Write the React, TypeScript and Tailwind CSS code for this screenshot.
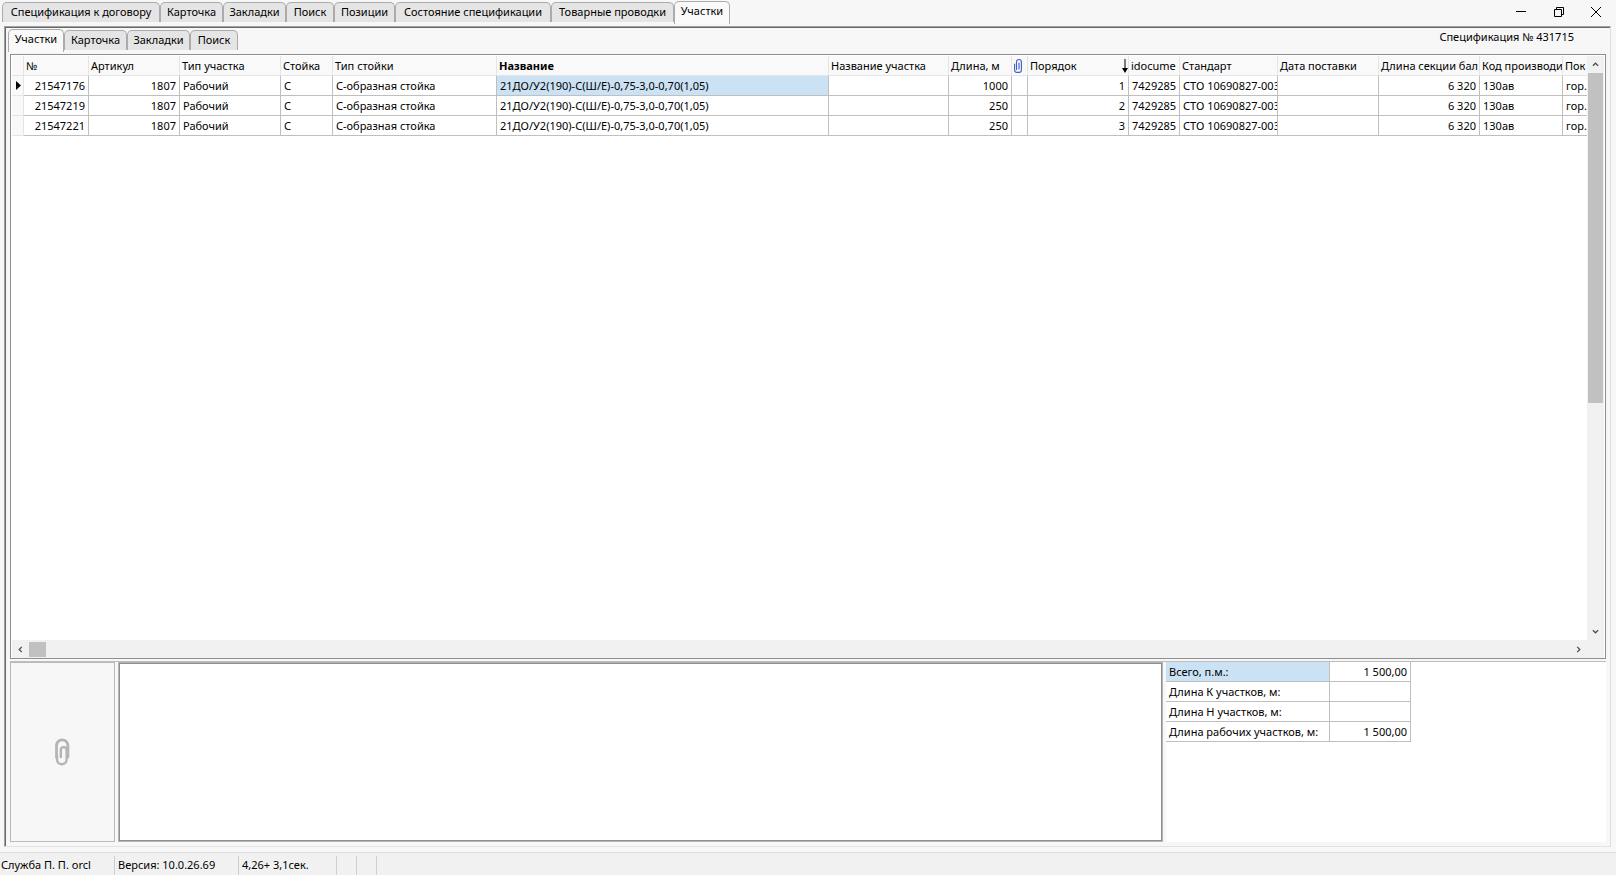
const tabs = ['Спецификация к договору', 'Карточка', 'Закладки', 'Поиск', 'Позиции', 'Состояние спецификации', 'Товарные проводки', 'Участки'];
const innerTabs = ['Участки', 'Карточка', 'Закладки', 'Поиск'];

function TabStrip({ items, active, widths, label }: { items: string[]; active: number; widths: string[]; label: string }) {
  return (
    <div role="tablist" aria-label={label} className="flex shrink-0 items-start">
      {items.map((t, i) => (
        <button
          key={t}
          role="tab"
          aria-selected={i === active}
          className={`${widths[i]} flex shrink-0 items-start justify-center rounded-t-[5px] border-t border-r border-l border-[#ababab] leading-[18px] whitespace-nowrap ${
            i === active ? 'h-[23px] bg-[#f9f9f9]' : 'mt-px h-5 bg-[#e5e5e5]'
          }`}
        >
          {t}
        </button>
      ))}
    </div>
  );
}

type Col = { head: string; w: string; right?: boolean; bold?: boolean; icon?: 'clip' | 'sort' };

const columns: Col[] = [
  { head: '', w: 'w-3' },
  { head: '№', w: 'w-[65px]', right: true },
  { head: 'Артикул', w: 'w-[91px]', right: true },
  { head: 'Тип участка', w: 'w-[101px]' },
  { head: 'Стойка', w: 'w-[52px]' },
  { head: 'Тип стойки', w: 'w-[164px]' },
  { head: 'Название', w: 'w-[332px]', bold: true },
  { head: 'Название участка', w: 'w-[120px]' },
  { head: 'Длина, м', w: 'w-[63px]', right: true },
  { head: '', w: 'w-4', icon: 'clip' },
  { head: 'Порядок', w: 'w-[101px]', right: true, icon: 'sort' },
  { head: 'idocume', w: 'w-[51px]', right: true },
  { head: 'Стандарт', w: 'w-[98px]' },
  { head: 'Дата поставки', w: 'w-[101px]' },
  { head: 'Длина секции бал', w: 'w-[101px]', right: true },
  { head: 'Код производи', w: 'w-[83px]' },
  { head: 'Пок', w: 'w-[26px]' },
];

const row = (id: string, len: string, order: string) => [
  '', id, '1807', 'Рабочий', 'С', 'С-образная стойка', '21ДО/У2(190)-С(Ш/Е)-0,75-3,0-0,70(1,05)', '', len, '', order,
  '7429285', 'СТО 10690827-003', '', '6 320', '130ав', 'гор.',
];
const rows = [row('21547176', '1000', '1'), row('21547219', '250', '2'), row('21547221', '250', '3')];

const totals = [
  ['Всего, п.м.:', '1 500,00'],
  ['Длина К участков, м:', ''],
  ['Длина Н участков, м:', ''],
  ['Длина рабочих участков, м:', '1 500,00'],
];

function SmallClip() {
  return (
    <svg viewBox="0 0 8 14" className="h-3.5 w-2 shrink-0" fill="none" stroke="#3a5fc8" strokeWidth="1.1" strokeLinecap="round">
      <path d="M2.5 10.5V3a2.4 2.4 0 0 1 4.9 0v8a2.4 2.4 0 0 1-2.4 2.4H3A2.4 2.4 0 0 1 .6 11V5" />
      <path d="M5 4v6" />
    </svg>
  );
}

function LargeClip() {
  return (
    <svg viewBox="0 0 16 28" className="h-7 w-4" fill="none" strokeLinecap="round">
      <path d="M2.5 19V7.5a5.7 5.7 0 0 1 11.4 0V19" stroke="#b5b5b5" strokeWidth="2.8" />
      <path d="M3 18v3.5a4.8 4.8 0 0 0 9.6 0V12a2.9 2.9 0 0 0-5.8 0v7" stroke="#b5b5b5" strokeWidth="2.4" />
    </svg>
  );
}

function Chevron({ d, label }: { d: string; label: string }) {
  return (
    <button aria-label={label} className="flex size-[17px] shrink-0 items-center justify-center">
      <svg viewBox="0 0 8 8" className="size-[7px]" fill="none" stroke="#505050" strokeWidth="1.5">
        <path d={d} />
      </svg>
    </button>
  );
}

export default function App() {
  return (
    <div className="flex h-screen flex-col overflow-hidden bg-[#f7f7f7] font-['Noto_Sans','Open_Sans',sans-serif] text-[11px] text-black">
      <header className="flex h-[26px] shrink-0 items-start justify-between pt-px pl-0.5">
        <TabStrip
          label="Разделы"
          items={tabs}
          active={7}
          widths={['w-[158px]', 'w-[63px]', 'w-[63px]', 'w-12', 'w-[61px]', 'w-[156px]', 'w-[123px]', 'w-14']}
        />
        <div className="flex pr-0.5">
          <button aria-label="Свернуть" className="flex h-[22px] w-[38px] items-center justify-center">
            <svg viewBox="0 0 10 10" className="size-2.5" stroke="#000" fill="none"><path d="M0 4.5h10" /></svg>
          </button>
          <button aria-label="Восстановить" className="flex h-[22px] w-[38px] items-center justify-center">
            <svg viewBox="0 0 10 10" className="size-2.5" stroke="#000" fill="none"><path d="M.5 2.5h7v7h-7zM2.5 2.5v-2h7v7h-2" /></svg>
          </button>
          <button aria-label="Закрыть" className="flex h-[22px] w-9 items-center justify-center">
            <svg viewBox="0 0 10 10" className="size-2.5" stroke="#000" fill="none"><path d="M0 0l10 10M10 0L0 10" /></svg>
          </button>
        </div>
      </header>

      <main className="mr-[5px] ml-1 flex min-h-0 flex-1 flex-col border border-t-[#a0a0a0] border-r-[#dedede] border-b-[#e3e3e3] border-l-[#a0a0a0] pt-px pr-1 pb-1 pl-[5px] shadow-[inset_1px_1px_0_#696969]">
        <div className="flex h-[26px] shrink-0 items-start justify-between">
          <div className="-ml-0.5 pt-px">
            <TabStrip label="Участки" items={innerTabs} active={0} widths={['w-14', 'w-[63px]', 'w-[63px]', 'w-12']} />
          </div>
          <span className="pr-8 leading-[18px]">Спецификация № 431715</span>
        </div>

        <section className="flex min-h-0 flex-1 flex-col border border-[#8f8f8f] bg-white pt-px pr-px pl-px">
          <div className="flex min-h-0 flex-1">
            <div className="min-w-0 flex-1 overflow-hidden">
              <table className="w-[1577px] table-fixed border-separate border-spacing-0">
                <colgroup>
                  {columns.map((c, i) => <col key={i} className={c.w} />)}
                </colgroup>
                <thead>
                  <tr>
                    {columns.map((c, i) => (
                      <th key={i} className={`h-5 overflow-hidden border-r border-b border-[#e5e5e5] bg-[#f9f9f9] p-0 text-left leading-[19px] whitespace-nowrap ${c.bold ? 'font-bold' : 'font-normal'}`}>
                        <div className="flex items-center justify-between overflow-hidden pl-0.5">
                          {c.head && <span>{c.head}</span>}
                          {c.icon === 'clip' && <SmallClip />}
                          {c.icon === 'sort' && (
                            <svg viewBox="0 0 6 14" className="h-3.5 w-1.5"><path d="M2.5 0h1v9H6l-3 5-3-5h2.5z" /></svg>
                          )}
                        </div>
                      </th>
                    ))}
                  </tr>
                </thead>
                <tbody>
                  {rows.map((r, ri) => (
                    <tr key={r[1]}>
                      {r.map((v, i) => (
                        <td
                          key={i}
                          className={`h-5 overflow-hidden border-r border-b p-0 leading-[19px] whitespace-nowrap ${
                            i === 0 ? 'border-[#e5e5e5] bg-[#f9f9f9]' : 'border-[#bfbfbf]'
                          } ${ri === 0 && i === 6 ? 'bg-[#cbe1f4]' : ''}`}
                        >
                          <div className={`overflow-hidden pl-[3px] ${columns[i].right ? 'pr-[3px] text-right' : ''}`}>
                            {i === 0 && ri === 0 ? (
                              <svg viewBox="0 0 5 9" className="ml-px h-[9px] w-[5px]"><path d="M0 0l5 4.5L0 9z" /></svg>
                            ) : v}
                          </div>
                        </td>
                      ))}
                    </tr>
                  ))}
                </tbody>
              </table>
            </div>
            <div className="flex w-[17px] shrink-0 flex-col items-center bg-[#f1f1f1]">
              <Chevron label="Вверх" d="M1 5.5l3-3 3 3" />
              <div className="h-[330px] w-[15px] bg-[#c1c1c1]" />
              <div className="flex-1" />
              <Chevron label="Вниз" d="M1 2.5l3 3 3-3" />
            </div>
          </div>
          <div className="flex h-[18px] shrink-0 items-center bg-[#f1f1f1]">
            <Chevron label="Влево" d="M5.5 1l-3 3 3 3" />
            <div className="h-[15px] w-[17px] bg-[#c1c1c1]" />
            <div className="flex-1" />
            <Chevron label="Вправо" d="M2.5 1l3 3-3 3" />
            <div className="w-[17px]" />
          </div>
        </section>

        <section className="mt-0.5 flex h-[181px] shrink-0 border-t border-[#bdbdbd]">
          <button aria-label="Вложение" className="flex w-[105px] shrink-0 items-center justify-center border border-[#b9b9b9] pr-0.5">
            <LargeClip />
          </button>
          <textarea aria-label="Примечание" className="ml-[3px] min-w-0 flex-1 resize-none border border-[#b4b4b4] bg-white shadow-[inset_0_0_0_1px_#8f8f8f] outline-none" />
          <div className="ml-[3px] w-[440px] shrink-0 bg-white">
            <table className="border-separate border-spacing-0">
              <tbody>
                {totals.map(([k, v], i) => (
                  <tr key={k}>
                    <th className={`h-5 w-[164px] border-r border-b border-[#bfbfbf] p-0 pl-[3px] text-left leading-[19px] font-normal whitespace-nowrap ${i === 0 ? 'bg-[#cbe1f4]' : ''}`}>{k}</th>
                    <td className="h-5 w-[81px] border-r border-b border-[#bfbfbf] p-0 pr-[3px] text-right leading-[19px]">{v}</td>
                  </tr>
                ))}
              </tbody>
            </table>
          </div>
        </section>
      </main>

      <footer className="mt-[5px] flex h-[23px] shrink-0 items-start border-t border-[#dcdcdc] bg-[#f1f1f1] pt-[3px] leading-[18px]">
        <span className="h-[19px] w-[115px] border-r border-[#cfcfcf] pl-px">Служба П. П. orcl</span>
        <span className="h-[19px] w-[124px] border-r border-[#cfcfcf] pl-[3px]">Версия: 10.0.26.69</span>
        <span className="h-[19px] w-[98px] border-r border-[#cfcfcf] pl-[3px]">4,26+ 3,1сек.</span>
        <span className="h-[19px] w-5 border-r border-[#cfcfcf]" />
        <span className="h-[19px] w-5 border-r border-[#cfcfcf]" />
      </footer>
    </div>
  );
}
